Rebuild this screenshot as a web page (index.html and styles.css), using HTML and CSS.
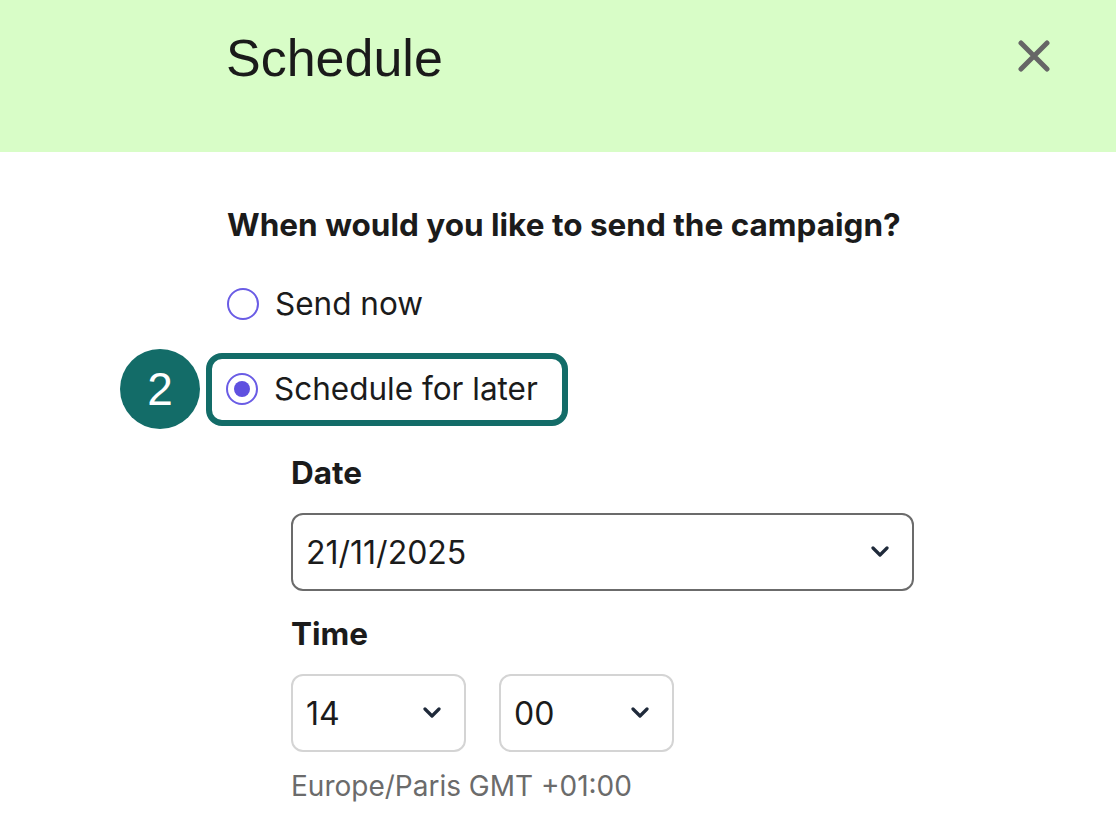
FILE: index.html
```html
<!DOCTYPE html>
<html>
<head>
<meta charset="utf-8">
<link rel="stylesheet" href="styles.css">
</head>
<body>
<header class="header">
  <h1 class="title">Schedule</h1>
  <button class="close" aria-label="Close">
    <svg width="32" height="32" viewBox="0 0 32 32"><path d="M3 3 L29 29 M29 3 L3 29" stroke="#666" stroke-width="5" stroke-linecap="round"/></svg>
  </button>
</header>
<main class="content">
  <p class="question">When would you like to send the campaign?</p>
  <div class="options">
    <label class="option">
      <span class="radio"></span>
      <span class="option-text">Send now</span>
    </label>
    <div class="option-row">
      <span class="badge">2</span>
      <label class="option highlighted">
        <span class="radio checked"></span>
        <span class="option-text">Schedule for later</span>
      </label>
    </div>
  </div>
  <div class="schedule">
    <div class="field-label">Date</div>
    <div class="select date-select">
      <span>21/11/2025</span>
      <svg class="chev" width="20" height="12" viewBox="0 0 20 12"><path d="M3 2 L10 9 L17 2" fill="none" stroke="#1f2a3a" stroke-width="3.2" stroke-linecap="round" stroke-linejoin="round"/></svg>
    </div>
    <div class="field-label time-label">Time</div>
    <div class="time-row">
      <div class="select small-select">
        <span>14</span>
        <svg class="chev" width="20" height="12" viewBox="0 0 20 12"><path d="M3 2 L10 9 L17 2" fill="none" stroke="#1f2a3a" stroke-width="3.2" stroke-linecap="round" stroke-linejoin="round"/></svg>
      </div>
      <div class="select small-select">
        <span>00</span>
        <svg class="chev" width="20" height="12" viewBox="0 0 20 12"><path d="M3 2 L10 9 L17 2" fill="none" stroke="#1f2a3a" stroke-width="3.2" stroke-linecap="round" stroke-linejoin="round"/></svg>
      </div>
    </div>
    <div class="tz">Europe/Paris GMT +01:00</div>
  </div>
</main>
</body>
</html>
```
FILE: styles.css
```css
* { box-sizing: border-box; }
html, body { margin: 0; padding: 0; background: #fff; }
body {
  width: 1116px;
  height: 822px;
  overflow: hidden;
  font-family: Inter, "Liberation Sans", sans-serif;
  color: #1b1b1b;
}
.header {
  height: 152px;
  background: #d8fdc7;
  display: flex;
  align-items: center;
  justify-content: space-between;
  padding: 0 66px 0 226px;
}
.title {
  margin: 0 0 36px 0;
  font-family: "Liberation Sans", Arial, sans-serif;
  font-weight: 400;
  font-size: 52px;
  line-height: 60px;
  color: #1a1a1a;
}
.close {
  border: 0;
  background: transparent;
  padding: 0;
  margin: 0 0 40px 0;
  display: flex;
}
.content {
  padding: 0 0 0 227px;
}
.question {
  margin: 0;
  padding-top: 56px;
  font-size: 31.5px;
  font-weight: 700;
  line-height: 34px;
}
.options {
  margin-top: 45px;
  display: flex;
  flex-direction: column;
  gap: 28px;
}
.option {
  display: flex;
  align-items: center;
  gap: 16px;
  font-size: 31.5px;
  line-height: 34px;
}
.option-row {
  display: flex;
  align-items: center;
  margin-left: -107px;
  gap: 6px;
}
.badge {
  width: 80px;
  height: 80px;
  border-radius: 50%;
  background: #136c68;
  color: #fff;
  display: flex;
  align-items: center;
  justify-content: center;
  font-family: "Liberation Sans", Arial, sans-serif;
  font-size: 46px;
}
.highlighted {
  border: 6px solid #136c68;
  border-radius: 16px;
  padding: 13px 24px 14px 14px;
}
.radio {
  width: 32px;
  height: 32px;
  border-radius: 50%;
  border: 2px solid #6a5ce5;
  display: flex;
  align-items: center;
  justify-content: center;
  flex-shrink: 0;
}
.radio.checked::after {
  content: "";
  width: 16px;
  height: 16px;
  border-radius: 50%;
  background: #5f50e0;
}
.schedule {
  padding-left: 64px;
  margin-top: 27px;
}
.field-label {
  font-size: 31.5px;
  font-weight: 700;
  line-height: 34px;
}
.time-label { margin-top: 26px; }
.select {
  display: flex;
  align-items: center;
  justify-content: space-between;
  font-size: 32px;
  border-radius: 12px;
  height: 78px;
  padding: 0 22px 0 13px;
}
.date-select {
  margin-top: 23px;
  width: 623px;
  border: 2px solid #6b6b6b;
}
.time-row {
  display: flex;
  gap: 33px;
  margin-top: 23px;
}
.small-select {
  width: 175px;
  border: 2px solid #d4d4d4;
}
.tz {
  margin-top: 17px;
  font-size: 28px;
  color: #6b6b6b;
}
```
